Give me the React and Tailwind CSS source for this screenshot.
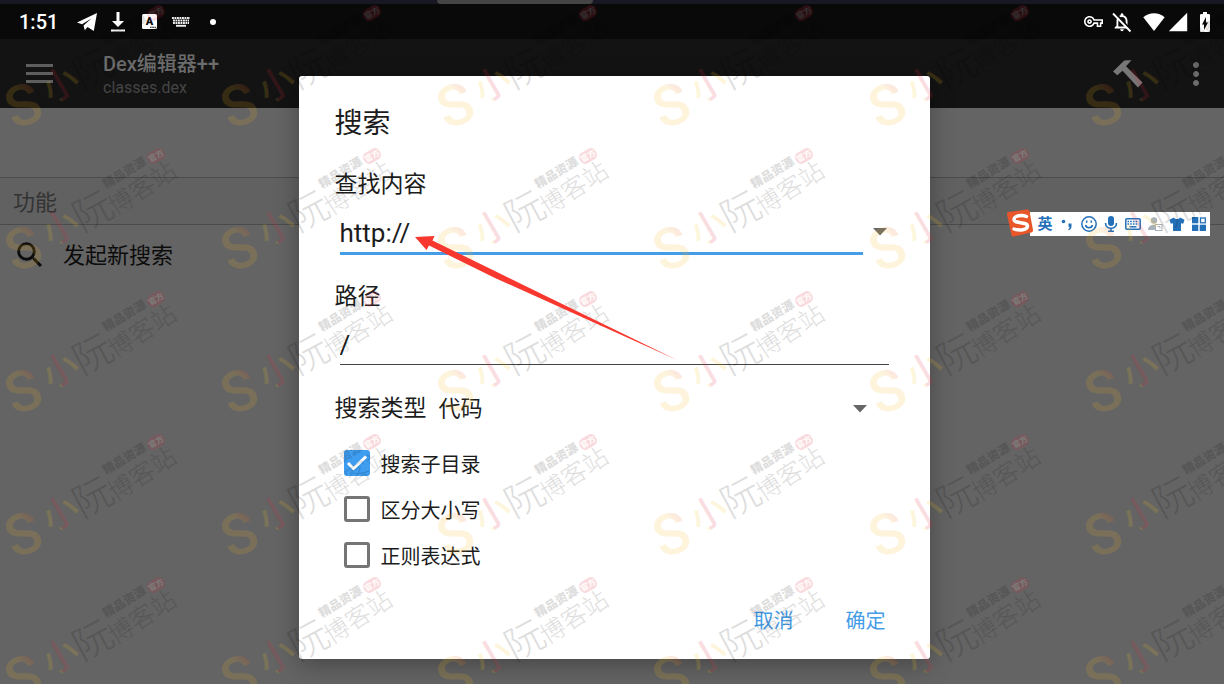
import { useState } from "react";
import {
  MdBatteryChargingFull,
  MdMoreVert,
  MdNotificationsNone,
  MdOutlineVpnKey,
  MdSearch,
  MdSignalCellular4Bar,
} from "react-icons/md";

const OPTIONS = [
  { id: "subdirs", label: "搜索子目录" },
  { id: "matchCase", label: "区分大小写" },
  { id: "regex", label: "正则表达式" },
];

const SEARCH_TYPES = ["代码", "字符串", "类名", "方法名"];

// ─── Status bar ──────────────────────────────────────────────────────────
function PlaneIcon() {
  return (
    <svg viewBox="0 0 20 18" className="h-[18px] w-5" fill="currentColor">
      <path d="M0 9.500 20 0l-3.200 18-6.300-4-2.700 3.200L6.500 12.500 14.500 5.500 5 11.300z" />
    </svg>
  );
}

function DownloadIcon() {
  return (
    <svg viewBox="0 0 16 20" className="h-5 w-4" fill="currentColor">
      <path d="M6.500 0h3v9H14l-6 6-6-6h4.500z" />
      <rect x="1" y="17.500" width="14" height="2" />
    </svg>
  );
}

function LetterIcon() {
  return (
    <svg viewBox="0 0 15 15" className="size-[15px]">
      <rect width="15" height="15" rx="1.500" fill="#fff" />
      <text x="7.500" y="11" textAnchor="middle" fontSize="11" fontWeight="900" fill="#090909">
        A
      </text>
      <path d="M8 13.300h1.500M10.300 13.300h1.500M12.500 13.300H14" stroke="#090909" />
    </svg>
  );
}

function KeyboardDotsIcon() {
  return (
    <svg viewBox="0 0 18 10" className="h-[10px] w-[18px]" stroke="#eee" strokeWidth="1.900">
      <path d="M0 1h18M1 3.500h16M1 6h16" strokeDasharray="1.900 0.600" />
      <path d="M4 8.800h10" />
    </svg>
  );
}

function BellOffIcon() {
  return (
    <span className="relative block size-[22px]">
      <MdNotificationsNone className="size-[22px]" />
      <svg viewBox="0 0 22 22" className="absolute inset-0 size-[22px]">
        <path d="M3.500 1.500 21 20" stroke="#090909" strokeWidth="2" />
        <path d="M2 2.500 19.500 20.500" stroke="#fff" strokeWidth="1.800" />
      </svg>
    </span>
  );
}

function WifiIcon() {
  return (
    <svg viewBox="0 0 22 18" className="h-[18px] w-[22px]" fill="currentColor">
      <path d="M11 18 .3 4.300C3.500 1.500 7 .2 11 .2s7.500 1.300 10.700 4.100z" />
    </svg>
  );
}

function StatusBar() {
  return (
    <div className="flex h-[35px] items-center justify-between bg-[#090909] pr-[7px] pl-[19px] text-white">
      <div className="flex items-center">
        <span className="w-[58px] text-xl font-medium">1:51</span>
        <PlaneIcon />
        <span className="ml-[13px]">
          <DownloadIcon />
        </span>
        <span className="ml-4">
          <LetterIcon />
        </span>
        <span className="ml-[15px]">
          <KeyboardDotsIcon />
        </span>
        <span className="ml-5 size-[6px] rounded-full bg-white" />
      </div>
      <div className="flex items-center">
        <MdOutlineVpnKey className="mr-2 size-[19px]" />
        <BellOffIcon />
        <span className="ml-[10px]">
          <WifiIcon />
        </span>
        <MdSignalCellular4Bar className="ml-[2px] size-[22px]" />
        <MdBatteryChargingFull className="ml-1 size-6" />
      </div>
    </div>
  );
}

// ─── App bar ─────────────────────────────────────────────────────────────
function HammerIcon() {
  return (
    <svg viewBox="0 0 30 28" className="h-7 w-[30px]" fill="#777">
      <path d="M0 11.500 10.500 1.200Q11.500.3 13 .3h5.500l-5.500 6L29.500 22.500 25 27.500 9.500 10.800 4.300 15.300z" />
    </svg>
  );
}

function AppBar() {
  return (
    <header className="flex h-[69px] items-center bg-[#131313] text-[#6c6c6c]">
      <button aria-label="菜单" className="ml-[26px] flex w-[27px] flex-col gap-[5px]">
        <span className="h-[3px] bg-[#5e5e5e]" />
        <span className="h-[3px] bg-[#5e5e5e]" />
        <span className="h-[3px] bg-[#5e5e5e]" />
      </button>
      <div className="ml-[50px] flex-1 pt-[3px]">
        <h1 className="text-xl leading-[26px] font-medium">Dex编辑器++</h1>
        <p className="text-base leading-[22px] text-[#454545]">classes.dex</p>
      </div>
      <button aria-label="构建">
        <HammerIcon />
      </button>
      <button aria-label="更多" className="mr-[10px] ml-[35px]">
        <MdMoreVert className="size-9" />
      </button>
    </header>
  );
}

// ─── Search dialog ───────────────────────────────────────────────────────
function Caret() {
  return (
    <svg viewBox="0 0 14 8" className="h-2 w-[14px]" fill="#666">
      <path d="M0 0h14L7 7.500z" />
    </svg>
  );
}

function OptionRow({ label, checked, onChange }) {
  return (
    <label className="flex h-[46px] items-center gap-[11px] pl-[9px] text-xl">
      <span className="relative block size-[26px]">
        <input
          type="checkbox"
          checked={checked}
          onChange={onChange}
          className="block size-[26px] appearance-none rounded-[3px] border-3 border-[#757575] checked:border-[#3f9df0] checked:bg-[#3f9df0]"
        />
        {checked && (
          <svg viewBox="0 0 26 26" className="pointer-events-none absolute inset-0 size-[26px]">
            <path d="m4 13 5.500 5.500L22 6.500" fill="none" stroke="#fff" strokeWidth="3" />
          </svg>
        )}
      </span>
      <span className="pt-[3px]">{label}</span>
    </label>
  );
}

function SearchDialog() {
  const [query, setQuery] = useState("http://");
  const [path, setPath] = useState("/");
  const [type, setType] = useState("代码");
  const [options, setOptions] = useState({ subdirs: true, matchCase: false, regex: false });

  function toggle(id) {
    setOptions((prev) => ({ ...prev, [id]: !prev[id] }));
  }

  return (
    <form
      role="dialog"
      aria-labelledby="dialog-title"
      onSubmit={(e) => e.preventDefault()}
      className="flex w-full max-w-[631px] flex-col rounded-[3px] bg-white px-9 pt-[30px] pb-[18px] text-[#1c1c1c] shadow-[0_6px_24px_rgba(0,0,0,0.3)]"
    >
      <h2 id="dialog-title" className="text-[28px] leading-9">
        搜索
      </h2>

      <label htmlFor="query" className="mt-[29px] text-[23px] leading-7">
        查找内容
      </label>
      <div className="mt-[13px] -mr-[3px] flex pl-[5px]">
        <input
          id="query"
          value={query}
          onChange={(e) => setQuery(e.target.value)}
          className="h-[43px] min-w-0 flex-1 border-b-3 border-[#459ce7] pt-[2px] text-[26px] outline-none"
        />
        <button type="button" aria-label="历史记录" className="flex w-[34px] items-center justify-center pb-1">
          <Caret />
        </button>
      </div>

      <label htmlFor="path" className="mt-7 text-[23px] leading-7">
        路径
      </label>
      <input
        id="path"
        value={path}
        onChange={(e) => setPath(e.target.value)}
        className="mx-[5px] mt-[13px] h-[41px] border-b border-[#444] pt-[2px] text-[26px] outline-none"
      />

      <div className="relative mt-[30px] flex items-center text-[23px] leading-7">
        <label htmlFor="type" className="mr-3">
          搜索类型
        </label>
        <select
          id="type"
          value={type}
          onChange={(e) => setType(e.target.value)}
          className="h-7 flex-1 appearance-none text-[22px] outline-none"
        >
          {SEARCH_TYPES.map((item) => (
            <option key={item}>{item}</option>
          ))}
        </select>
        <span className="pointer-events-none absolute right-[27px]">
          <Caret />
        </span>
      </div>

      <div className="mt-[17px] flex flex-col items-start">
        {OPTIONS.map((option) => (
          <OptionRow
            key={option.id}
            label={option.label}
            checked={options[option.id]}
            onChange={() => toggle(option.id)}
          />
        ))}
      </div>

      <div className="mt-[23px] flex justify-end gap-5 text-xl text-[#459ce7]">
        <button type="button" className="h-10 w-[72px]">
          取消
        </button>
        <button type="submit" className="-mr-2 h-10 w-[72px]">
          确定
        </button>
      </div>
    </form>
  );
}

// ─── Input method toolbar ────────────────────────────────────────────────
function ImeButton({ label, children }) {
  return (
    <button aria-label={label} className="flex h-6 w-[22px] items-center justify-center">
      {children}
    </button>
  );
}

function ImeBar() {
  return (
    <div className="absolute top-[209px] right-[14px] flex items-center text-[#2470b8]">
      <svg viewBox="0 0 28 28" className="relative z-10 -mr-[4px] size-7">
        <path d="M1 5.500Q.5 3.500 2.500 3L21 .5q2-.3 2.500 1.700L27 21q.3 2-1.700 2.500L8 27.500q-2 .5-2.500-1.500z" fill="#e9562a" />
        <path
          d="M20.500 7.500C16 5.500 8 6.500 8 10.500c0 4.500 13.500 2 13.500 6.500 0 4-8 5-13.500 3"
          fill="none"
          stroke="#fff"
          strokeWidth="3.400"
          strokeLinecap="round"
        />
      </svg>
      <div className="mt-[2px] flex h-6 bg-white pl-1">
        <ImeButton label="中英文切换">
          <span className="text-[15px] leading-6 font-bold">英</span>
        </ImeButton>
        <ImeButton label="标点">
          <svg viewBox="0 0 14 14" className="size-[14px]" fill="currentColor">
            <circle cx="3.500" cy="4.500" r="1.800" />
            <path d="M8.500 6.500h3v3c0 2-1.200 3.200-3 3.700l-.3-.9c1-.5 1.400-1.300 1.300-2.500h-1z" />
          </svg>
        </ImeButton>
        <ImeButton label="表情">
          <svg viewBox="0 0 16 16" className="size-4" fill="none" stroke="currentColor" strokeWidth="1.500">
            <circle cx="8" cy="8" r="7.200" />
            <path d="M4.500 9c.8 3.500 6.200 3.500 7 0M5.700 4.500v2.300M10.300 4.500v2.300" />
          </svg>
        </ImeButton>
        <ImeButton label="语音">
          <svg viewBox="0 0 14 16" className="h-4 w-[14px]" fill="currentColor">
            <rect x="4" y="0" width="6" height="10" rx="3" />
            <path d="M1.500 7c0 7 11 7 11 0M7 12v3M4 15.200h6" fill="none" stroke="currentColor" strokeWidth="1.600" />
          </svg>
        </ImeButton>
        <ImeButton label="软键盘">
          <svg viewBox="0 0 16 12" className="h-3 w-4" fill="none" stroke="currentColor" strokeWidth="1.500">
            <rect x=".8" y=".8" width="14.400" height="10.400" rx="1" />
            <path d="M2.500 3.500h11M2.500 6h11" strokeDasharray="1.600 1.100" />
            <path d="M4.500 8.800h7" />
          </svg>
        </ImeButton>
        <ImeButton label="账号">
          <svg viewBox="0 0 16 16" className="size-4" fill="#a9b1ba">
            <circle cx="7" cy="4.500" r="3.200" />
            <path d="M1 14c0-7 12-7 12 0z" />
            <rect x="8.500" y="8.500" width="6.500" height="6" fill="#fff" stroke="#a9b1ba" />
            <path d="M10.500 10.500h2.500v2" fill="none" stroke="#a9b1ba" />
          </svg>
        </ImeButton>
        <ImeButton label="皮肤">
          <svg viewBox="0 0 16 14" className="h-[14px] w-4" fill="currentColor">
            <path d="M5 .5C6 2.500 10 2.500 11 .5l4.500 2.300-1.300 4-2.200-.6V14H4V6.200l-2.200.6-1.300-4z" />
          </svg>
        </ImeButton>
        <ImeButton label="工具箱">
          <svg viewBox="0 0 14 14" className="size-[14px]" fill="currentColor">
            <rect x="0" y="0" width="6.300" height="6.300" />
            <rect x="8.500" y="1" width="4.800" height="4.800" fill="none" stroke="currentColor" strokeWidth="1.300" />
            <rect x="0" y="7.700" width="6.300" height="6.300" />
            <rect x="7.700" y="7.700" width="6.300" height="6.300" />
          </svg>
        </ImeButton>
      </div>
    </div>
  );
}

// ─── Watermark ───────────────────────────────────────────────────────────
const TILES = Array.from({ length: 30 }, (_, i) => ({
  x: 25 + (i % 6) * 216,
  y: 105 + Math.floor(i / 6) * 143,
}));

function Watermark() {
  return (
    <svg aria-hidden="true" className="pointer-events-none absolute inset-0 h-full w-full">
      <defs>
        <linearGradient id="wm-s" x1="0" y1="1" x2="1" y2="0">
          <stop offset="0.650" stopColor="#f9b91c" />
          <stop offset="0.850" stopColor="#e8452c" />
        </linearGradient>
        <linearGradient id="wm-xiao" x1="0" y1="0" x2="1" y2="0">
          <stop offset="0.330" stopColor="#f7c81c" />
          <stop offset="0.340" stopColor="#e0263c" />
          <stop offset="0.620" stopColor="#e0263c" />
          <stop offset="0.630" stopColor="#f7c81c" />
        </linearGradient>
      </defs>
      {TILES.map((tile) => (
        <g key={`${tile.x}-${tile.y}`} transform={`translate(${tile.x} ${tile.y})`} textAnchor="middle">
          <g opacity="0.150">
            <text transform="translate(-2 0) rotate(-20)" y="20" fontSize="57" fontWeight="500" fill="url(#wm-s)">
              S
            </text>
            <text transform="translate(35 -21) rotate(-30)" y="13" fontSize="36" fontWeight="500" fill="url(#wm-xiao)">
              小
            </text>
          </g>
          <g opacity="0.130" fill="#000">
            <text transform="translate(68 -37) rotate(-28)" y="14" fontSize="39" fontWeight="300">
              阮
            </text>
            <text transform="translate(117 -60) rotate(-33)" y="9" fontSize="25" fontWeight="300">
              博客站
            </text>
            <text transform="translate(99 -76) rotate(-31)" y="5" fontSize="12" fontWeight="900">
              精品资源
            </text>
          </g>
          <g transform="translate(131 -92) rotate(-30)" opacity="0.160">
            <rect x="-9" y="-6" width="18" height="12" rx="5" fill="#e0263c" />
            <text y="3" fontSize="8" fontWeight="700" fill="#fff">
              官方
            </text>
          </g>
        </g>
      ))}
    </svg>
  );
}

function Arrow() {
  return (
    <svg viewBox="0 0 262 124" className="pointer-events-none absolute top-[236px] left-[415px] h-[124px] w-[262px]">
      <path d="M0 1 19.500 0l-2 4.500L90 40l172 84L80 42 14 9.500 11.500 14z" fill="#f8382f" />
    </svg>
  );
}

export default function App() {
  return (
    <div className="relative flex min-h-screen flex-col overflow-hidden bg-[#646464] font-[Roboto,'Noto_Sans_CJK_SC',sans-serif]">
      <div className="flex h-1 justify-center bg-[#171823] pr-[194px]">
        <div className="w-[156px] rounded-b-sm bg-[#444]" />
      </div>
      <StatusBar />
      <AppBar />

      <main className="pt-[69px]">
        <h2 className="flex h-12 items-center border-y border-[#4b4b4b] bg-[#616161] px-[13px] pt-[2px] text-[22px] text-[#333]">
          功能
        </h2>
        <button className="flex h-[60px] w-full items-center gap-4 pl-[13px] text-[22px] text-[#0c0c0c]">
          <MdSearch className="size-[34px]" />
          发起新搜索
        </button>
      </main>

      <div className="absolute inset-0 flex items-start justify-center pt-[76px] pl-1">
        <SearchDialog />
      </div>

      <ImeBar />
      <Watermark />
      <Arrow />
    </div>
  );
}
